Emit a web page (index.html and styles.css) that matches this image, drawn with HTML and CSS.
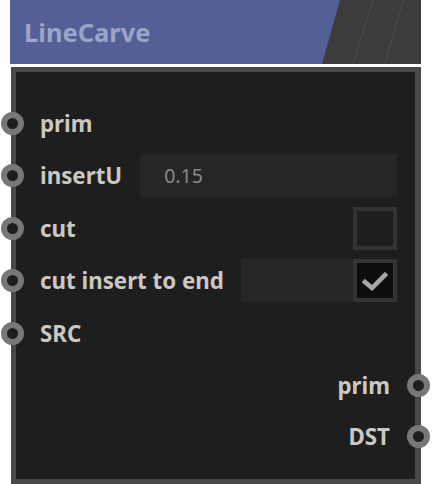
FILE: index.html
```html
<!DOCTYPE html>
<html>
<head>
<meta charset="utf-8">
<link rel="stylesheet" href="styles.css">
</head>
<body>
<div class="node">
  <div class="header">
    <svg class="header-bg" width="411" height="64" viewBox="0 0 411 64" aria-hidden="true">
      <rect x="0" y="0" width="411" height="64" fill="#3c3c3c"/>
      <polygon points="0,0 330,0 312,64 0,64" fill="#535f95"/>
      <line x1="363" y1="0" x2="343" y2="64" stroke="#4a4a4a" stroke-width="1.2"/>
      <line x1="393" y1="0" x2="375" y2="64" stroke="#4a4a4a" stroke-width="1.2"/>
    </svg>
    <span class="title">LineCarve</span>
  </div>
  <div class="body">
    <div class="row in">
      <span class="socket"></span>
      <span class="label">prim</span>
    </div>
    <div class="row in">
      <span class="socket"></span>
      <span class="label">insertU</span>
      <div class="field"><span class="value">0.15</span></div>
    </div>
    <div class="row in">
      <span class="socket"></span>
      <span class="label">cut</span>
      <div class="spacer"></div>
      <span class="check"></span>
    </div>
    <div class="row in">
      <span class="socket"></span>
      <span class="label">cut insert to end</span>
      <div class="field field-check">
        <span class="check checked">
          <svg width="26" height="20" viewBox="0 0 26 20" aria-hidden="true">
            <path d="M3 11 L10 17 L23 4" fill="none" stroke="#a9a7a5" stroke-width="4.5" stroke-linecap="square"/>
          </svg>
        </span>
      </div>
    </div>
    <div class="row in">
      <span class="socket"></span>
      <span class="label">SRC</span>
    </div>
    <div class="row out">
      <span class="label">prim</span>
      <span class="socket"></span>
    </div>
    <div class="row out">
      <span class="label">DST</span>
      <span class="socket"></span>
    </div>
  </div>
</div>
</body>
</html>
```

FILE: styles.css
```css
html, body {
  margin: 0;
  padding: 0;
  background: #ffffff;
}
body {
  width: 432px;
  height: 484px;
  overflow: hidden;
  font-family: "Noto Sans", "Open Sans", sans-serif;
}
.node {
  margin-left: 10px;
  width: 411px;
}
.header {
  position: relative;
  height: 64px;
  display: flex;
  align-items: center;
}
.header-bg {
  position: absolute;
  left: 0;
  top: 0;
  display: block;
}
.title {
  position: relative;
  margin-left: 14px;
  margin-top: -1px;
  font-size: 25.5px;
  font-weight: 700;
  color: #9ca4c8;
}
.body {
  margin-top: 3px;
  margin-left: 1px;
  border: 5px solid #484848;
  border-right-width: 6px;
  background: #1e1e1e;
  height: 417px;
  box-sizing: border-box;
  padding: 29px 18px 0 0;
  display: flex;
  flex-direction: column;
  gap: 8.5px;
}
.row {
  height: 44px;
  display: flex;
  align-items: center;
}
.row.out {
  justify-content: flex-end;
  margin-right: -18px;
  height: 43px;
}
.socket {
  width: 11px;
  height: 11px;
  border: 6.5px solid #777777;
  border-radius: 50%;
  background: #1e1e1e;
  flex: none;
}
.row.in .socket {
  margin-left: -15px;
  margin-right: 16px;
}
.row.out .socket {
  margin-left: 17px;
  margin-right: -15px;
}
.label {
  font-size: 22.3px;
  font-weight: 700;
  color: #cbc8c4;
  white-space: nowrap;
}
.field {
  flex: 1;
  margin-left: 18px;
  height: 43px;
  background: #262626;
  display: flex;
  align-items: center;
}
.value {
  margin-left: 24px;
  font-size: 19.5px;
  color: #8a8a8a;
}
.field-check {
  justify-content: flex-end;
  margin-left: 17px;
}
.spacer {
  flex: 1;
}
.check {
  width: 36px;
  height: 35px;
  border: 4px solid #333333;
  background: #1e1e1e;
  flex: none;
  display: flex;
  align-items: center;
  justify-content: center;
}
.check.checked {
  background: #0e0e0e;
}
.check svg {
  display: block;
}
```
